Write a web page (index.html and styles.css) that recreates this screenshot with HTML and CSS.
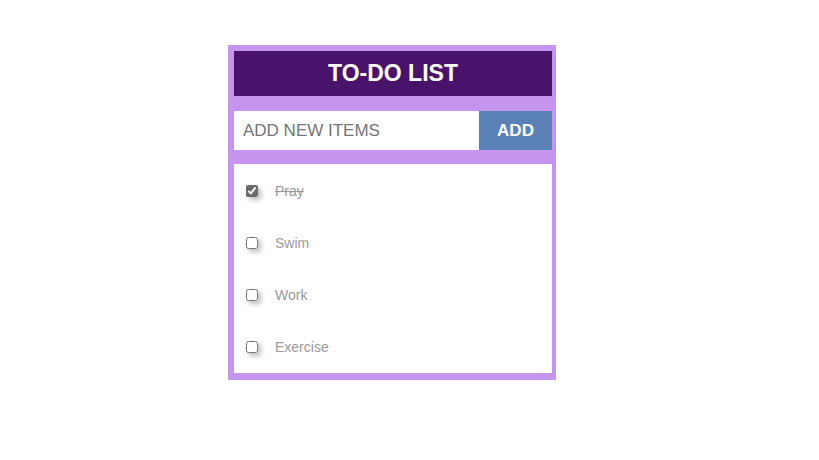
FILE: index.html
```html
<!DOCTYPE html>
<html>
<head>
<meta charset="utf-8">
<link rel="stylesheet" href="styles.css">
</head>
<body>
<div class="page">
  <div class="todo">
    <h1 class="title">TO-DO LIST</h1>
    <form class="add-row">
      <input class="add-input" type="text" placeholder="ADD NEW ITEMS">
      <button class="add-btn" type="button">ADD</button>
    </form>
    <ul class="items">
      <li class="item done"><input class="check" type="checkbox" checked><span class="label">Pray</span></li>
      <li class="item"><input class="check" type="checkbox"><span class="label">Swim</span></li>
      <li class="item"><input class="check" type="checkbox"><span class="label">Work</span></li>
      <li class="item"><input class="check" type="checkbox"><span class="label">Exercise</span></li>
    </ul>
  </div>
</div>
</body>
</html>
```
FILE: styles.css
```css
* { box-sizing: border-box; }
html, body { margin: 0; padding: 0; background: #fff; }
body { font-family: "Liberation Sans", Arial, sans-serif; }
.page {
  display: flex;
  padding: 45px 0 0 228px;
}
.todo {
  width: 328px;
  background: #c594ee;
  padding: 6px 4px 7px 6px;
  display: flex;
  flex-direction: column;
}
.title {
  margin: 0;
  height: 45px;
  background: #4a136b;
  color: #fff;
  font-size: 23px;
  font-weight: bold;
  display: flex;
  align-items: center;
  justify-content: center;
}
.add-row {
  margin: 15px 0 14px;
  display: flex;
  height: 39px;
}
.add-input {
  flex: 1;
  min-width: 0;
  border: none;
  outline: none;
  background: #fff;
  padding: 0 9px;
  font-family: "Liberation Sans", Arial, sans-serif;
  font-size: 17px;
  color: #333;
}
.add-input::placeholder { color: #757575; }
.add-btn {
  width: 73px;
  border: none;
  background: #5a81b5;
  color: #fff;
  font-family: "Liberation Sans", Arial, sans-serif;
  font-size: 17px;
  font-weight: bold;
  padding: 0;
}
.items {
  list-style: none;
  margin: 0;
  padding: 1px 0 0;
  background: #fff;
  height: 209px;
  display: flex;
  flex-direction: column;
}
.item {
  height: 52px;
  display: flex;
  align-items: center;
  padding-left: 12px;
  font-size: 14px;
  color: #9a9a9a;
}
.check {
  margin: 0;
  width: 12px;
  height: 12px;
  accent-color: #6b6b6b;
  box-shadow: 3px 3px 5px rgba(0,0,0,0.25);
}
.label { margin-left: 17px; }
.done .label { text-decoration: line-through; }
```
